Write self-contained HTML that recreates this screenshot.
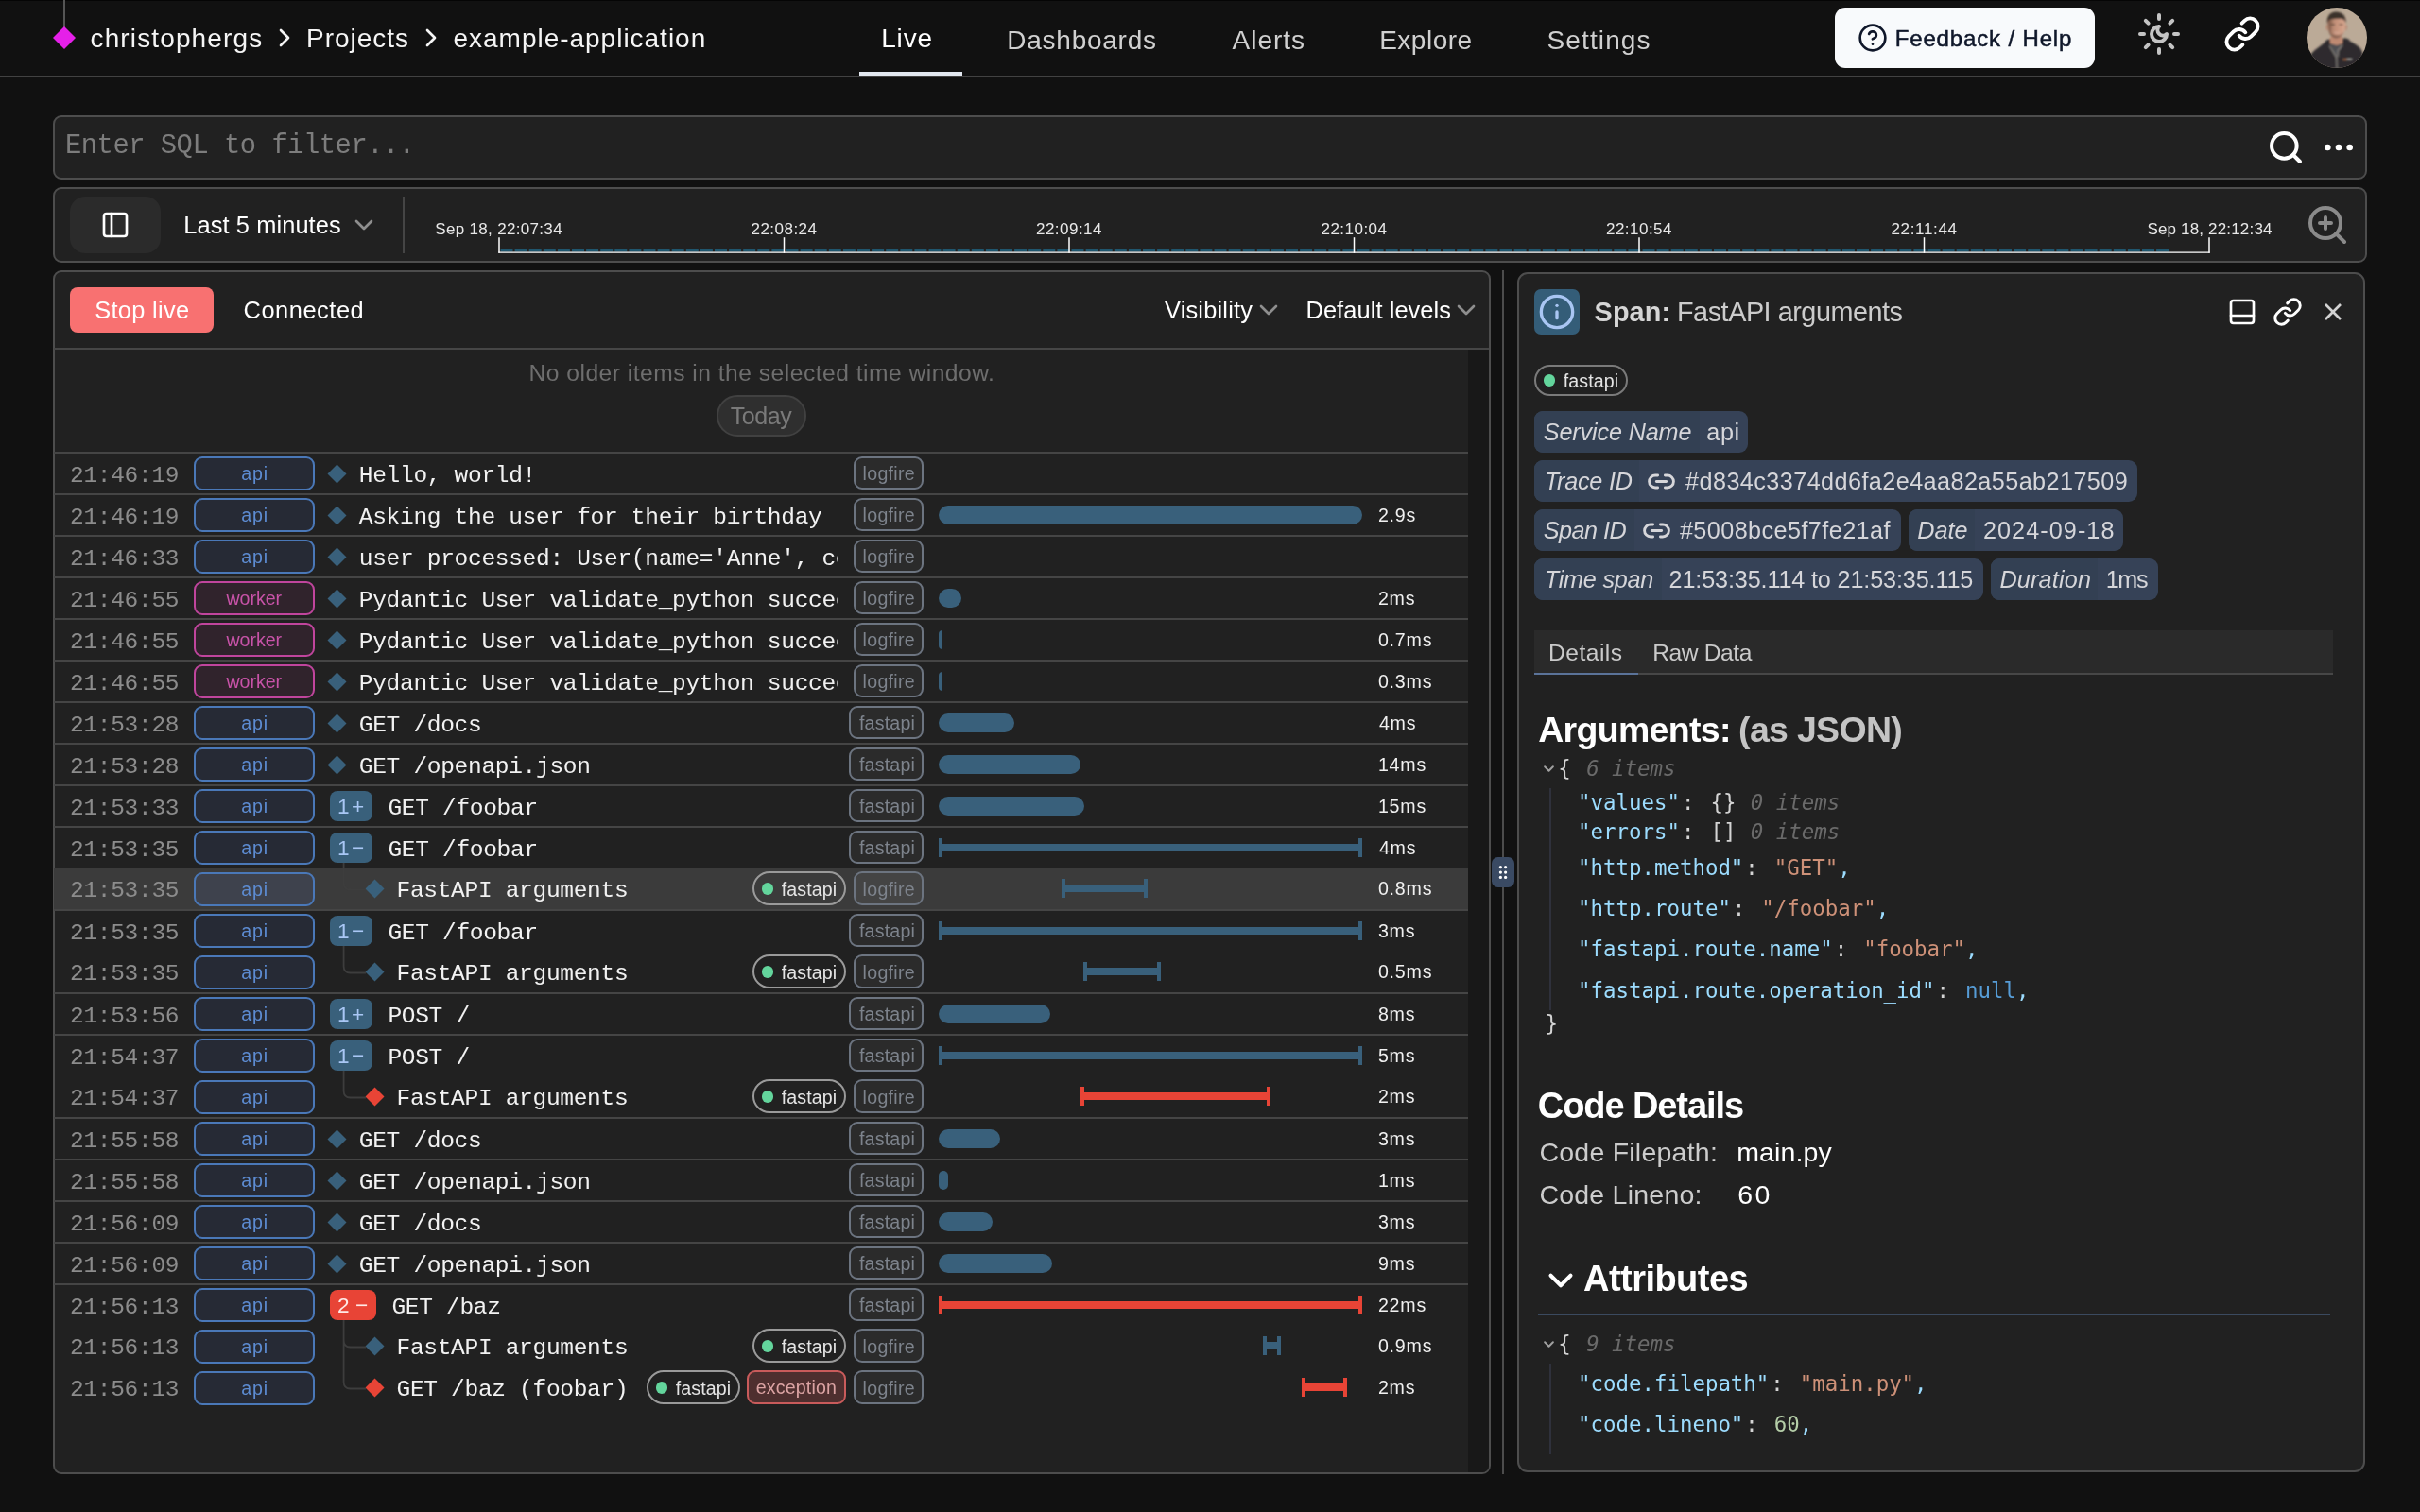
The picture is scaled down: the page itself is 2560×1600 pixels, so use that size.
<!DOCTYPE html>
<html lang="en"><head><meta charset="utf-8"><title>Logfire - Live</title><style>
*{box-sizing:border-box;margin:0;padding:0}
html,body{width:2560px;height:1600px;overflow:hidden;background:#111111}
body{position:relative;font-family:"Liberation Sans",sans-serif;-webkit-font-smoothing:antialiased}
div,span,svg.i,p,h1,h2,a,button{position:absolute;display:block}
.t{white-space:pre;font-family:"Liberation Sans",sans-serif}
.m{font-family:"Liberation Mono",monospace}
.d{font-family:"DejaVu Sans Mono",monospace}
.clip{overflow:hidden}
</style></head><body>
<div id="root" style="left:0;top:0;width:2560px;height:1600px;will-change:transform">
<div style="left:0;top:0;width:2560px;height:1px;background:#050505"></div>
<div style="left:0px;top:80px;width:2560px;height:2px;background:#424242;"></div>
<div style="left:67px;top:0px;width:1.6px;height:30px;background:#555555;"></div>
<svg class="i" style="left:54px;top:26px" width="28" height="28" viewBox="0 0 28 28"><path d="M14 2 26 14 14 26 2 14Z" fill="#e520e9"/></svg>
<span class="t" style="left:95.50px;top:27px;font-size:28px;line-height:28px;color:#f5f5f5;letter-spacing:1.131px;">christophergs</span>
<svg class="i" style="left:285px;top:24px;" width="32" height="32" viewBox="0 0 24 24" fill="none" stroke="#f5f5f5" stroke-width="2" stroke-linecap="round" stroke-linejoin="round"><path d="m9 18 6-6-6-6"/></svg>
<span class="t" style="left:324.00px;top:27px;font-size:28px;line-height:28px;color:#f5f5f5;letter-spacing:0.978px;">Projects</span>
<svg class="i" style="left:440px;top:24px;" width="32" height="32" viewBox="0 0 24 24" fill="none" stroke="#f5f5f5" stroke-width="2" stroke-linecap="round" stroke-linejoin="round"><path d="m9 18 6-6-6-6"/></svg>
<span class="t" style="left:479.50px;top:27px;font-size:28px;line-height:28px;color:#f5f5f5;letter-spacing:0.982px;">example-application</span>
<span class="t" style="left:932.20px;top:27px;font-size:28px;line-height:28px;color:#ffffff;letter-spacing:0.834px;">Live</span>
<div style="left:909px;top:76px;width:109px;height:4px;background:#e2e8f0;"></div>
<span class="t" style="left:1065.30px;top:29px;font-size:28px;line-height:28px;color:#d0d0d0;letter-spacing:0.743px;">Dashboards</span>
<span class="t" style="left:1303.60px;top:29px;font-size:28px;line-height:28px;color:#d0d0d0;letter-spacing:0.944px;">Alerts</span>
<span class="t" style="left:1459.20px;top:29px;font-size:28px;line-height:28px;color:#d0d0d0;letter-spacing:0.504px;">Explore</span>
<span class="t" style="left:1636.60px;top:29px;font-size:28px;line-height:28px;color:#d0d0d0;letter-spacing:1.102px;">Settings</span>
<div style="left:1941px;top:8px;width:275px;height:64px;background:#f8fafc;border-radius:11px;"></div>
<svg class="i" style="left:1964.6px;top:23.7px;" width="32" height="32" viewBox="0 0 24 24" fill="none" stroke="#0f172a" stroke-width="2" stroke-linecap="round" stroke-linejoin="round"><circle cx="12" cy="12" r="10"/><path d="M9.09 9a3 3 0 0 1 5.83 1c0 2-3 3-3 3"/><path d="M12 17h.01"/></svg>
<span class="t" style="left:2004.70px;top:29px;font-size:24px;line-height:24px;color:#0f172a;letter-spacing:0.851px;-webkit-text-stroke:0.5px #0f172a;">Feedback / Help</span>
<svg class="i" style="left:2260px;top:12px;" width="48" height="48" viewBox="0 0 24 24" fill="none" stroke="#c4c4c4" stroke-width="2" stroke-linecap="round" stroke-linejoin="round"><path d="M12 8a2.83 2.83 0 0 0 4 4 4 4 0 1 1-4-4"/><path d="M12 2v2"/><path d="M12 20v2"/><path d="m4.9 4.9 1.4 1.4"/><path d="m17.7 17.7 1.4 1.4"/><path d="M2 12h2"/><path d="M20 12h2"/><path d="m6.3 17.7-1.4 1.4"/><path d="m19.1 4.9-1.4 1.4"/></svg>
<svg class="i" style="left:2352px;top:16px;" width="40" height="40" viewBox="0 0 24 24" fill="none" stroke="#ffffff" stroke-width="2.3" stroke-linecap="round" stroke-linejoin="round"><path d="M10 13a5 5 0 0 0 7.54.54l3-3a5 5 0 0 0-7.07-7.07l-1.72 1.71"/><path d="M14 11a5 5 0 0 0-7.54-.54l-3 3a5 5 0 0 0 7.07 7.07l1.71-1.71"/></svg>
<svg class="i" style="left:2440px;top:8px" width="64" height="64" viewBox="0 0 64 64"><defs><clipPath id="av"><circle cx="32" cy="32" r="32"/></clipPath><filter id="avb" x="-10%" y="-10%" width="120%" height="120%"><feGaussianBlur stdDeviation="0.800"/></filter><linearGradient id="avf" x1="0" x2="1"><stop offset="0" stop-color="#96705c"/><stop offset="0.450" stop-color="#c4917a"/><stop offset="1" stop-color="#d8a78f"/></linearGradient></defs><g clip-path="url(#av)"><rect width="64" height="64" fill="#bbaa97"/><g filter="url(#avb)"><path d="M3 52C6 46 12 43 18.500 37.500 20 34.500 23 33.500 26 33L40 32.500C43 32 44.500 33 46 35.500 52 39 57.500 42 59 47L62 66H2Z" fill="#2d2c2e"/><path d="M24 37.500 36.500 37 32 52Z" fill="#4f4f52"/><path d="M25 31H38V38L32 40 25 38Z" fill="#bf8a72"/><path d="M22.400 10C22 24 24 29 28 31.500 31 33 34 32.500 37 30 40.500 26.500 41.500 22 41.200 10Z" fill="url(#avf)"/><path d="M20.300 18.500h2.200v5.500h-1.500ZM41.200 18.500h1.800l-.6 5.500h-1.400Z" fill="#b88670"/><path d="M23.500 25C25 30 29 33 32 32.500 35 32.500 38 29 39.500 25.500 37 29 34 30 32 29.500 29 29.500 26 28.500 23.500 25Z" fill="#7d5c4c" opacity="0.850"/><path d="M21.800 17C21 9 25 4.500 31 4.400 37 4.300 42.500 8 41.700 17 41 14 39.500 12.500 37 12 33 11.500 29 12 26 12.500 23.500 13 22.500 15 21.800 17Z" fill="#3a302c"/><path d="M25.500 18.200h4.500M34.500 18h4" stroke="#5a4236" stroke-width="1.200" fill="none"/><path d="M22.500 13C22.500 20 23 25 25.500 28.500 26 24 26.500 19 27.500 14Z" fill="#7a5646" opacity="0.550"/><path d="M29.500 26.200C31.500 27.200 33.500 27 35 26" stroke="#dcb4a2" stroke-width="1" fill="none"/><path d="M24.300 40.500C27 45 30 49 31.700 52.800L32.200 66M38 39.500 33.300 45.500 33 52" stroke="#8a8580" stroke-width="1.300" fill="none"/><path d="M38.600 55h4" stroke="#c8743c" stroke-width="1.200"/><path d="M42.600 54.800h5.500" stroke="#d8d4d0" stroke-width="1"/></g></g></svg>
<div style="left:56px;top:122px;width:2448px;height:68px;background:#212121;border:2px solid #4d4d4d;border-radius:9px;"></div>
<span class="t m" style="left:69.00px;top:141px;font-size:28.8px;line-height:28.8px;color:#7d7d7d;letter-spacing:-0.480px;">Enter SQL to filter...</span>
<svg class="i" style="left:2398px;top:136.3px;" width="40" height="40" viewBox="0 0 24 24" fill="none" stroke="#ffffff" stroke-width="2.4" stroke-linecap="round" stroke-linejoin="round"><circle cx="11" cy="11" r="8"/><path d="m21 21-4.3-4.3"/></svg>
<svg class="i" style="left:2453.8px;top:136px;" width="40" height="40" viewBox="0 0 24 24" fill="none" stroke="#ffffff" stroke-width="2" stroke-linecap="round" stroke-linejoin="round"><circle cx="12" cy="12" r="1"/><circle cx="19" cy="12" r="1"/><circle cx="5" cy="12" r="1"/></svg>
<div style="left:56px;top:198px;width:2448px;height:80px;background:#212121;border:2px solid #4d4d4d;border-radius:9px;"></div>
<div style="left:74px;top:208px;width:96px;height:60px;background:#2b2b2b;border-radius:16px;"></div>
<svg class="i" style="left:106px;top:222px;" width="32" height="32" viewBox="0 0 24 24" fill="none" stroke="#ffffff" stroke-width="2" stroke-linecap="round" stroke-linejoin="round"><rect width="18" height="18" x="3" y="3" rx="2"/><path d="M9 3v18"/></svg>
<span class="t" style="left:194.30px;top:226px;font-size:25.4px;line-height:25.4px;color:#ffffff;letter-spacing:0.097px;">Last 5 minutes</span>
<svg class="i" style="left:369px;top:222px;" width="32" height="32" viewBox="0 0 24 24" fill="none" stroke="#8e8e8e" stroke-width="2" stroke-linecap="round" stroke-linejoin="round"><path d="m6 9 6 6 6-6"/></svg>
<div style="left:426px;top:208px;width:2px;height:60px;background:#454545;"></div>
<svg class="i" style="left:520px;top:248px" width="1830" height="24" viewBox="520 248 1830 24" fill="none"><path d="M529.500 265.200H2294" stroke="#1f566e" stroke-width="2.800" stroke-dasharray="13 2.100"/><path d="M527.300 267.100H2337.700" stroke="#ffffff" stroke-width="1.400"/><path d="M528.0 251.200V267.800" stroke="#ffffff" stroke-width="1.500"/><path d="M829.5 251.200V267.800" stroke="#ffffff" stroke-width="1.500"/><path d="M1131.0 251.200V267.800" stroke="#ffffff" stroke-width="1.500"/><path d="M1432.5 251.200V267.800" stroke="#ffffff" stroke-width="1.500"/><path d="M1734.0 251.200V267.800" stroke="#ffffff" stroke-width="1.500"/><path d="M2035.5 251.200V267.800" stroke="#ffffff" stroke-width="1.500"/><path d="M2337.0 251.200V267.800" stroke="#ffffff" stroke-width="1.500"/></svg>
<span class="t" style="left:460.30px;top:234px;font-size:17px;line-height:17px;color:#e8e8e8;letter-spacing:0.319px;">Sep 18, 22:07:34</span>
<span class="t" style="left:794.50px;top:234px;font-size:17px;line-height:17px;color:#e8e8e8;letter-spacing:0.471px;">22:08:24</span>
<span class="t" style="left:1096.00px;top:234px;font-size:17px;line-height:17px;color:#e8e8e8;letter-spacing:0.471px;">22:09:14</span>
<span class="t" style="left:1397.50px;top:234px;font-size:17px;line-height:17px;color:#e8e8e8;letter-spacing:0.471px;">22:10:04</span>
<span class="t" style="left:1699.00px;top:234px;font-size:17px;line-height:17px;color:#e8e8e8;letter-spacing:0.471px;">22:10:54</span>
<span class="t" style="left:2000.50px;top:234px;font-size:17px;line-height:17px;color:#e8e8e8;letter-spacing:0.652px;">22:11:44</span>
<span class="t" style="left:2271.40px;top:234px;font-size:17px;line-height:17px;color:#e8e8e8;letter-spacing:0.172px;">Sep 18, 22:12:34</span>
<svg class="i" style="left:2438px;top:214px;" width="48" height="48" viewBox="0 0 24 24" fill="none" stroke="#8a8a8a" stroke-width="2" stroke-linecap="round" stroke-linejoin="round"><circle cx="11" cy="11" r="8"/><path d="M21 21l-4.35-4.35"/><path d="M11 8v6"/><path d="M8 11h6"/></svg>
<div style="left:56px;top:286px;width:1521px;height:1274px;background:#212121;border:2px solid #4d4d4d;border-radius:9px;"></div>
<div style="left:74px;top:304px;width:152px;height:48px;background:#f87171;border-radius:8px;"></div>
<span class="t" style="left:100.20px;top:316px;font-size:25.4px;line-height:25.4px;color:#ffffff;letter-spacing:0.329px;">Stop live</span>
<span class="t" style="left:257.60px;top:316px;font-size:25.4px;line-height:25.4px;color:#ffffff;letter-spacing:0.535px;">Connected</span>
<span class="t" style="left:1232.00px;top:316px;font-size:25.4px;line-height:25.4px;color:#ffffff;letter-spacing:0.182px;">Visibility</span>
<svg class="i" style="left:1326.2px;top:312px;" width="32" height="32" viewBox="0 0 24 24" fill="none" stroke="#8e8e8e" stroke-width="2" stroke-linecap="round" stroke-linejoin="round"><path d="m6 9 6 6 6-6"/></svg>
<span class="t" style="left:1381.50px;top:316px;font-size:25.4px;line-height:25.4px;color:#ffffff;letter-spacing:0.082px;">Default levels</span>
<svg class="i" style="left:1534.9px;top:312px;" width="32" height="32" viewBox="0 0 24 24" fill="none" stroke="#8e8e8e" stroke-width="2" stroke-linecap="round" stroke-linejoin="round"><path d="m6 9 6 6 6-6"/></svg>
<div style="left:57px;top:368px;width:1518px;height:2px;background:#464646;"></div>
<div style="left:1553px;top:370px;width:22px;height:1188px;background:#181818;border-radius:0 0 7px 0;"></div>
<span class="t" style="left:559.50px;top:383px;font-size:24.6px;line-height:24.6px;color:#6e6e6e;letter-spacing:0.496px;">No older items in the selected time window.</span>
<div style="left:758px;top:418px;width:95px;height:44px;background:#2f2f2f;border:2px solid #414141;border-radius:22px;"></div>
<span class="t" style="left:772.70px;top:428px;font-size:25px;line-height:25px;color:#7a7a7a;letter-spacing:-0.405px;">Today</span>
<div style="left:57px;top:478px;width:1496px;height:2px;background:#454545;"></div>
<span class="t m" style="left:74px;top:492px;font-size:24.5px;line-height:24.5px;letter-spacing:-0.3px;color:#8c8c8c">21:46:19</span>
<div style="left:205px;top:483px;width:128px;height:36px;background:#262a35;border:2px solid #4a78b8;border-radius:9px;"></div>
<span class="t" style="left:255.25px;top:492px;font-size:19.6px;line-height:19.6px;color:#5d8cd2;letter-spacing:0.859px;">api</span>
<svg class="i" style="left:346px;top:491px" width="21" height="21" viewBox="0 0 21 21"><path d="M10.500 0.500 20.500 10.500 10.500 20.500 0.500 10.500Z" fill="#39607b"/></svg>
<div class="clip" style="left:378.4px;top:483px;width:508.6px;height:36px"><span class="t m" style="left:1.4px;top:9px;font-size:24.5px;line-height:24.5px;letter-spacing:-0.3px;color:#f2f2f2">Hello, world!</span></div>
<div style="left:903.4px;top:483px;width:73.6px;height:35px;background:#2b2b2b;border:2px solid #6c7480;border-radius:9px;"></div>
<span class="t" style="left:912.60px;top:492px;font-size:19.6px;line-height:19.6px;color:#7d838c;letter-spacing:0.289px;">logfire</span>
<div style="left:57px;top:522px;width:1496px;height:2px;background:#454545;"></div>
<span class="t m" style="left:74px;top:536px;font-size:24.5px;line-height:24.5px;letter-spacing:-0.3px;color:#8c8c8c">21:46:19</span>
<div style="left:205px;top:527px;width:128px;height:36px;background:#262a35;border:2px solid #4a78b8;border-radius:9px;"></div>
<span class="t" style="left:255.25px;top:536px;font-size:19.6px;line-height:19.6px;color:#5d8cd2;letter-spacing:0.859px;">api</span>
<svg class="i" style="left:346px;top:535px" width="21" height="21" viewBox="0 0 21 21"><path d="M10.500 0.500 20.500 10.500 10.500 20.500 0.500 10.500Z" fill="#39607b"/></svg>
<div class="clip" style="left:378.4px;top:527px;width:508.6px;height:36px"><span class="t m" style="left:1.4px;top:9px;font-size:24.5px;line-height:24.5px;letter-spacing:-0.3px;color:#f2f2f2">Asking the user for their birthday</span></div>
<div style="left:903.4px;top:527px;width:73.6px;height:35px;background:#2b2b2b;border:2px solid #6c7480;border-radius:9px;"></div>
<span class="t" style="left:912.60px;top:536px;font-size:19.6px;line-height:19.6px;color:#7d838c;letter-spacing:0.289px;">logfire</span>
<div style="left:993px;top:535px;width:448px;height:20px;background:#39607b;border-radius:10px;"></div>
<span class="t" style="left:1457.90px;top:536px;font-size:19.6px;line-height:19.6px;color:#f0f0f0;letter-spacing:0.800px;">2.9s</span>
<div style="left:57px;top:566px;width:1496px;height:2px;background:#454545;"></div>
<span class="t m" style="left:74px;top:580px;font-size:24.5px;line-height:24.5px;letter-spacing:-0.3px;color:#8c8c8c">21:46:33</span>
<div style="left:205px;top:571px;width:128px;height:36px;background:#262a35;border:2px solid #4a78b8;border-radius:9px;"></div>
<span class="t" style="left:255.25px;top:580px;font-size:19.6px;line-height:19.6px;color:#5d8cd2;letter-spacing:0.859px;">api</span>
<svg class="i" style="left:346px;top:579px" width="21" height="21" viewBox="0 0 21 21"><path d="M10.500 0.500 20.500 10.500 10.500 20.500 0.500 10.500Z" fill="#39607b"/></svg>
<div class="clip" style="left:378.4px;top:571px;width:508.6px;height:36px"><span class="t m" style="left:1.4px;top:9px;font-size:24.5px;line-height:24.5px;letter-spacing:-0.3px;color:#f2f2f2">user processed: User(name='Anne', country_code='USA')</span></div>
<div style="left:903.4px;top:571px;width:73.6px;height:35px;background:#2b2b2b;border:2px solid #6c7480;border-radius:9px;"></div>
<span class="t" style="left:912.60px;top:580px;font-size:19.6px;line-height:19.6px;color:#7d838c;letter-spacing:0.289px;">logfire</span>
<div style="left:57px;top:610px;width:1496px;height:2px;background:#454545;"></div>
<span class="t m" style="left:74px;top:624px;font-size:24.5px;line-height:24.5px;letter-spacing:-0.3px;color:#8c8c8c">21:46:55</span>
<div style="left:205px;top:615px;width:128px;height:36px;background:#30232c;border:2px solid #c0459d;border-radius:9px;"></div>
<span class="t" style="left:239.50px;top:624px;font-size:19.6px;line-height:19.6px;color:#c853a8;letter-spacing:-0.053px;">worker</span>
<svg class="i" style="left:346px;top:623px" width="21" height="21" viewBox="0 0 21 21"><path d="M10.500 0.500 20.500 10.500 10.500 20.500 0.500 10.500Z" fill="#39607b"/></svg>
<div class="clip" style="left:378.4px;top:615px;width:508.6px;height:36px"><span class="t m" style="left:1.4px;top:9px;font-size:24.5px;line-height:24.5px;letter-spacing:-0.3px;color:#f2f2f2">Pydantic User validate_python succeeded</span></div>
<div style="left:903.4px;top:615px;width:73.6px;height:35px;background:#2b2b2b;border:2px solid #6c7480;border-radius:9px;"></div>
<span class="t" style="left:912.60px;top:624px;font-size:19.6px;line-height:19.6px;color:#7d838c;letter-spacing:0.289px;">logfire</span>
<div style="left:993px;top:623px;width:24px;height:20px;background:#39607b;border-radius:10px;"></div>
<span class="t" style="left:1457.90px;top:624px;font-size:19.6px;line-height:19.6px;color:#f0f0f0;letter-spacing:0.800px;">2ms</span>
<div style="left:57px;top:654px;width:1496px;height:2px;background:#454545;"></div>
<span class="t m" style="left:74px;top:668px;font-size:24.5px;line-height:24.5px;letter-spacing:-0.3px;color:#8c8c8c">21:46:55</span>
<div style="left:205px;top:659px;width:128px;height:36px;background:#30232c;border:2px solid #c0459d;border-radius:9px;"></div>
<span class="t" style="left:239.50px;top:668px;font-size:19.6px;line-height:19.6px;color:#c853a8;letter-spacing:-0.053px;">worker</span>
<svg class="i" style="left:346px;top:667px" width="21" height="21" viewBox="0 0 21 21"><path d="M10.500 0.500 20.500 10.500 10.500 20.500 0.500 10.500Z" fill="#39607b"/></svg>
<div class="clip" style="left:378.4px;top:659px;width:508.6px;height:36px"><span class="t m" style="left:1.4px;top:9px;font-size:24.5px;line-height:24.5px;letter-spacing:-0.3px;color:#f2f2f2">Pydantic User validate_python succeeded</span></div>
<div style="left:903.4px;top:659px;width:73.6px;height:35px;background:#2b2b2b;border:2px solid #6c7480;border-radius:9px;"></div>
<span class="t" style="left:912.60px;top:668px;font-size:19.6px;line-height:19.6px;color:#7d838c;letter-spacing:0.289px;">logfire</span>
<div style="left:993px;top:667px;width:4px;height:20px;background:#39607b;border-radius:10px 0 0 10px;"></div>
<span class="t" style="left:1457.90px;top:668px;font-size:19.6px;line-height:19.6px;color:#f0f0f0;letter-spacing:0.800px;">0.7ms</span>
<div style="left:57px;top:698px;width:1496px;height:2px;background:#454545;"></div>
<span class="t m" style="left:74px;top:712px;font-size:24.5px;line-height:24.5px;letter-spacing:-0.3px;color:#8c8c8c">21:46:55</span>
<div style="left:205px;top:703px;width:128px;height:36px;background:#30232c;border:2px solid #c0459d;border-radius:9px;"></div>
<span class="t" style="left:239.50px;top:712px;font-size:19.6px;line-height:19.6px;color:#c853a8;letter-spacing:-0.053px;">worker</span>
<svg class="i" style="left:346px;top:711px" width="21" height="21" viewBox="0 0 21 21"><path d="M10.500 0.500 20.500 10.500 10.500 20.500 0.500 10.500Z" fill="#39607b"/></svg>
<div class="clip" style="left:378.4px;top:703px;width:508.6px;height:36px"><span class="t m" style="left:1.4px;top:9px;font-size:24.5px;line-height:24.5px;letter-spacing:-0.3px;color:#f2f2f2">Pydantic User validate_python succeeded</span></div>
<div style="left:903.4px;top:703px;width:73.6px;height:35px;background:#2b2b2b;border:2px solid #6c7480;border-radius:9px;"></div>
<span class="t" style="left:912.60px;top:712px;font-size:19.6px;line-height:19.6px;color:#7d838c;letter-spacing:0.289px;">logfire</span>
<div style="left:993px;top:711px;width:4px;height:20px;background:#39607b;border-radius:10px 0 0 10px;"></div>
<span class="t" style="left:1457.90px;top:712px;font-size:19.6px;line-height:19.6px;color:#f0f0f0;letter-spacing:0.800px;">0.3ms</span>
<div style="left:57px;top:742px;width:1496px;height:2px;background:#454545;"></div>
<span class="t m" style="left:74px;top:756px;font-size:24.5px;line-height:24.5px;letter-spacing:-0.3px;color:#8c8c8c">21:53:28</span>
<div style="left:205px;top:747px;width:128px;height:36px;background:#262a35;border:2px solid #4a78b8;border-radius:9px;"></div>
<span class="t" style="left:255.25px;top:756px;font-size:19.6px;line-height:19.6px;color:#5d8cd2;letter-spacing:0.859px;">api</span>
<svg class="i" style="left:346px;top:755px" width="21" height="21" viewBox="0 0 21 21"><path d="M10.500 0.500 20.500 10.500 10.500 20.500 0.500 10.500Z" fill="#39607b"/></svg>
<div class="clip" style="left:378.4px;top:747px;width:508.6px;height:36px"><span class="t m" style="left:1.4px;top:9px;font-size:24.5px;line-height:24.5px;letter-spacing:-0.3px;color:#f2f2f2">GET /docs</span></div>
<div style="left:898.4px;top:747px;width:78.6px;height:35px;background:#2b2b2b;border:2px solid #6c7480;border-radius:9px;"></div>
<span class="t" style="left:908.95px;top:756px;font-size:19.6px;line-height:19.6px;color:#7d838c;letter-spacing:0.193px;">fastapi</span>
<div style="left:993px;top:755px;width:80px;height:20px;background:#39607b;border-radius:10px;"></div>
<span class="t" style="left:1458.90px;top:756px;font-size:19.6px;line-height:19.6px;color:#f0f0f0;letter-spacing:0.800px;">4ms</span>
<div style="left:57px;top:786px;width:1496px;height:2px;background:#454545;"></div>
<span class="t m" style="left:74px;top:800px;font-size:24.5px;line-height:24.5px;letter-spacing:-0.3px;color:#8c8c8c">21:53:28</span>
<div style="left:205px;top:791px;width:128px;height:36px;background:#262a35;border:2px solid #4a78b8;border-radius:9px;"></div>
<span class="t" style="left:255.25px;top:800px;font-size:19.6px;line-height:19.6px;color:#5d8cd2;letter-spacing:0.859px;">api</span>
<svg class="i" style="left:346px;top:799px" width="21" height="21" viewBox="0 0 21 21"><path d="M10.500 0.500 20.500 10.500 10.500 20.500 0.500 10.500Z" fill="#39607b"/></svg>
<div class="clip" style="left:378.4px;top:791px;width:508.6px;height:36px"><span class="t m" style="left:1.4px;top:9px;font-size:24.5px;line-height:24.5px;letter-spacing:-0.3px;color:#f2f2f2">GET /openapi.json</span></div>
<div style="left:898.4px;top:791px;width:78.6px;height:35px;background:#2b2b2b;border:2px solid #6c7480;border-radius:9px;"></div>
<span class="t" style="left:908.95px;top:800px;font-size:19.6px;line-height:19.6px;color:#7d838c;letter-spacing:0.193px;">fastapi</span>
<div style="left:993px;top:799px;width:150px;height:20px;background:#39607b;border-radius:10px;"></div>
<span class="t" style="left:1457.90px;top:800px;font-size:19.6px;line-height:19.6px;color:#f0f0f0;letter-spacing:0.800px;">14ms</span>
<div style="left:57px;top:830px;width:1496px;height:2px;background:#454545;"></div>
<span class="t m" style="left:74px;top:844px;font-size:24.5px;line-height:24.5px;letter-spacing:-0.3px;color:#8c8c8c">21:53:33</span>
<div style="left:205px;top:835px;width:128px;height:36px;background:#262a35;border:2px solid #4a78b8;border-radius:9px;"></div>
<span class="t" style="left:255.25px;top:844px;font-size:19.6px;line-height:19.6px;color:#5d8cd2;letter-spacing:0.859px;">api</span>
<div style="left:349px;top:837px;width:45px;height:32px;background:#39607b;border-radius:8px;"></div>
<span class="t" style="left:357.10px;top:843px;font-size:22.6px;line-height:22.6px;color:#a9c7f5;letter-spacing:2.337px;">1+</span>
<div class="clip" style="left:409px;top:835px;width:478px;height:36px"><span class="t m" style="left:1.4px;top:9px;font-size:24.5px;line-height:24.5px;letter-spacing:-0.3px;color:#f2f2f2">GET /foobar</span></div>
<div style="left:898.4px;top:835px;width:78.6px;height:35px;background:#2b2b2b;border:2px solid #6c7480;border-radius:9px;"></div>
<span class="t" style="left:908.95px;top:844px;font-size:19.6px;line-height:19.6px;color:#7d838c;letter-spacing:0.193px;">fastapi</span>
<div style="left:993px;top:843px;width:154px;height:20px;background:#39607b;border-radius:10px;"></div>
<span class="t" style="left:1457.90px;top:844px;font-size:19.6px;line-height:19.6px;color:#f0f0f0;letter-spacing:0.800px;">15ms</span>
<div style="left:57px;top:874px;width:1496px;height:2px;background:#454545;"></div>
<span class="t m" style="left:74px;top:888px;font-size:24.5px;line-height:24.5px;letter-spacing:-0.3px;color:#8c8c8c">21:53:35</span>
<div style="left:205px;top:879px;width:128px;height:36px;background:#262a35;border:2px solid #4a78b8;border-radius:9px;"></div>
<span class="t" style="left:255.25px;top:888px;font-size:19.6px;line-height:19.6px;color:#5d8cd2;letter-spacing:0.859px;">api</span>
<div style="left:349px;top:881px;width:45px;height:32px;background:#39607b;border-radius:8px;"></div>
<span class="t" style="left:357.10px;top:887px;font-size:22.6px;line-height:22.6px;color:#a9c7f5;letter-spacing:2.337px;">1−</span>
<div class="clip" style="left:409px;top:879px;width:478px;height:36px"><span class="t m" style="left:1.4px;top:9px;font-size:24.5px;line-height:24.5px;letter-spacing:-0.3px;color:#f2f2f2">GET /foobar</span></div>
<div style="left:898.4px;top:879px;width:78.6px;height:35px;background:#2b2b2b;border:2px solid #6c7480;border-radius:9px;"></div>
<span class="t" style="left:908.95px;top:888px;font-size:19.6px;line-height:19.6px;color:#7d838c;letter-spacing:0.193px;">fastapi</span>
<div style="left:993px;top:893px;width:448px;height:8px;background:#39607b;"></div>
<div style="left:993px;top:887px;width:4px;height:20px;background:#39607b;"></div>
<div style="left:1437px;top:887px;width:4px;height:20px;background:#39607b;"></div>
<span class="t" style="left:1458.90px;top:888px;font-size:19.6px;line-height:19.6px;color:#f0f0f0;letter-spacing:0.800px;">4ms</span>
<div style="left:57px;top:918px;width:1496px;height:45px;background:#3b3b3b;"></div>
<div style="left:57px;top:962px;width:1496px;height:2px;background:#555555;"></div>
<span class="t m" style="left:74px;top:931px;font-size:24.5px;line-height:24.5px;letter-spacing:-0.3px;color:#8c8c8c">21:53:35</span>
<div style="left:205px;top:923px;width:128px;height:36px;background:#3e424d;border:2px solid #4a78b8;border-radius:9px;"></div>
<span class="t" style="left:255.25px;top:932px;font-size:19.6px;line-height:19.6px;color:#5d8cd2;letter-spacing:0.859px;">api</span>
<svg class="i" style="left:385.7px;top:930px" width="21" height="21" viewBox="0 0 21 21"><path d="M10.500 0.500 20.500 10.500 10.500 20.500 0.500 10.500Z" fill="#39607b"/></svg>
<div class="clip" style="left:418.1px;top:923px;width:468.9px;height:36px"><span class="t m" style="left:1.4px;top:8px;font-size:24.5px;line-height:24.5px;letter-spacing:-0.3px;color:#f2f2f2">FastAPI arguments</span></div>
<div style="left:796px;top:922px;width:99px;height:36px;border:2px solid #9a9a9a;border-radius:18px;"></div>
<div style="left:806px;top:934.3px;width:12.4px;height:12.4px;background:#63d59c;border-radius:7px;"></div>
<span class="t" style="left:826.80px;top:932px;font-size:19.6px;line-height:19.6px;color:#e4e4e4;letter-spacing:0.109px;">fastapi</span>
<div style="left:903.4px;top:922px;width:73.6px;height:36px;background:#444444;border:2px solid #6c7480;border-radius:9px;"></div>
<span class="t" style="left:912.60px;top:932px;font-size:19.6px;line-height:19.6px;color:#7d838c;letter-spacing:0.289px;">logfire</span>
<div style="left:1122.7px;top:936px;width:91.0px;height:8px;background:#39607b;"></div>
<div style="left:1122.7px;top:930px;width:4px;height:20px;background:#39607b;"></div>
<div style="left:1209.7px;top:930px;width:4px;height:20px;background:#39607b;"></div>
<span class="t" style="left:1457.90px;top:931px;font-size:19.6px;line-height:19.6px;color:#f0f0f0;letter-spacing:0.800px;">0.8ms</span>
<div style="left:57px;top:962px;width:1496px;height:2px;background:#454545;"></div>
<span class="t m" style="left:74px;top:976px;font-size:24.5px;line-height:24.5px;letter-spacing:-0.3px;color:#8c8c8c">21:53:35</span>
<div style="left:205px;top:967px;width:128px;height:36px;background:#262a35;border:2px solid #4a78b8;border-radius:9px;"></div>
<span class="t" style="left:255.25px;top:976px;font-size:19.6px;line-height:19.6px;color:#5d8cd2;letter-spacing:0.859px;">api</span>
<div style="left:349px;top:969px;width:45px;height:32px;background:#39607b;border-radius:8px;"></div>
<span class="t" style="left:357.10px;top:975px;font-size:22.6px;line-height:22.6px;color:#a9c7f5;letter-spacing:2.337px;">1−</span>
<div class="clip" style="left:409px;top:967px;width:478px;height:36px"><span class="t m" style="left:1.4px;top:9px;font-size:24.5px;line-height:24.5px;letter-spacing:-0.3px;color:#f2f2f2">GET /foobar</span></div>
<div style="left:898.4px;top:967px;width:78.6px;height:35px;background:#2b2b2b;border:2px solid #6c7480;border-radius:9px;"></div>
<span class="t" style="left:908.95px;top:976px;font-size:19.6px;line-height:19.6px;color:#7d838c;letter-spacing:0.193px;">fastapi</span>
<div style="left:993px;top:981px;width:448px;height:8px;background:#39607b;"></div>
<div style="left:993px;top:975px;width:4px;height:20px;background:#39607b;"></div>
<div style="left:1437px;top:975px;width:4px;height:20px;background:#39607b;"></div>
<span class="t" style="left:1457.90px;top:976px;font-size:19.6px;line-height:19.6px;color:#f0f0f0;letter-spacing:0.800px;">3ms</span>
<span class="t m" style="left:74px;top:1019px;font-size:24.5px;line-height:24.5px;letter-spacing:-0.3px;color:#8c8c8c">21:53:35</span>
<div style="left:205px;top:1011px;width:128px;height:36px;background:#262a35;border:2px solid #4a78b8;border-radius:9px;"></div>
<span class="t" style="left:255.25px;top:1020px;font-size:19.6px;line-height:19.6px;color:#5d8cd2;letter-spacing:0.859px;">api</span>
<svg class="i" style="left:385.7px;top:1018px" width="21" height="21" viewBox="0 0 21 21"><path d="M10.500 0.500 20.500 10.500 10.500 20.500 0.500 10.500Z" fill="#39607b"/></svg>
<div class="clip" style="left:418.1px;top:1011px;width:468.9px;height:36px"><span class="t m" style="left:1.4px;top:8px;font-size:24.5px;line-height:24.5px;letter-spacing:-0.3px;color:#f2f2f2">FastAPI arguments</span></div>
<div style="left:796px;top:1010px;width:99px;height:36px;border:2px solid #9a9a9a;border-radius:18px;"></div>
<div style="left:806px;top:1022.3px;width:12.4px;height:12.4px;background:#63d59c;border-radius:7px;"></div>
<span class="t" style="left:826.80px;top:1020px;font-size:19.6px;line-height:19.6px;color:#e4e4e4;letter-spacing:0.109px;">fastapi</span>
<div style="left:903.4px;top:1010px;width:73.6px;height:36px;background:#2b2b2b;border:2px solid #6c7480;border-radius:9px;"></div>
<span class="t" style="left:912.60px;top:1020px;font-size:19.6px;line-height:19.6px;color:#7d838c;letter-spacing:0.289px;">logfire</span>
<div style="left:1145.9px;top:1024px;width:82.0px;height:8px;background:#39607b;"></div>
<div style="left:1145.9px;top:1018px;width:4px;height:20px;background:#39607b;"></div>
<div style="left:1223.9px;top:1018px;width:4px;height:20px;background:#39607b;"></div>
<span class="t" style="left:1457.90px;top:1019px;font-size:19.6px;line-height:19.6px;color:#f0f0f0;letter-spacing:0.800px;">0.5ms</span>
<div style="left:57px;top:1050px;width:1496px;height:2px;background:#454545;"></div>
<span class="t m" style="left:74px;top:1064px;font-size:24.5px;line-height:24.5px;letter-spacing:-0.3px;color:#8c8c8c">21:53:56</span>
<div style="left:205px;top:1055px;width:128px;height:36px;background:#262a35;border:2px solid #4a78b8;border-radius:9px;"></div>
<span class="t" style="left:255.25px;top:1064px;font-size:19.6px;line-height:19.6px;color:#5d8cd2;letter-spacing:0.859px;">api</span>
<div style="left:349px;top:1057px;width:45px;height:32px;background:#39607b;border-radius:8px;"></div>
<span class="t" style="left:357.10px;top:1063px;font-size:22.6px;line-height:22.6px;color:#a9c7f5;letter-spacing:2.337px;">1+</span>
<div class="clip" style="left:409px;top:1055px;width:478px;height:36px"><span class="t m" style="left:1.4px;top:9px;font-size:24.5px;line-height:24.5px;letter-spacing:-0.3px;color:#f2f2f2">POST /</span></div>
<div style="left:898.4px;top:1055px;width:78.6px;height:35px;background:#2b2b2b;border:2px solid #6c7480;border-radius:9px;"></div>
<span class="t" style="left:908.95px;top:1064px;font-size:19.6px;line-height:19.6px;color:#7d838c;letter-spacing:0.193px;">fastapi</span>
<div style="left:993px;top:1063px;width:118px;height:20px;background:#39607b;border-radius:10px;"></div>
<span class="t" style="left:1457.90px;top:1064px;font-size:19.6px;line-height:19.6px;color:#f0f0f0;letter-spacing:0.800px;">8ms</span>
<div style="left:57px;top:1094px;width:1496px;height:2px;background:#454545;"></div>
<span class="t m" style="left:74px;top:1108px;font-size:24.5px;line-height:24.5px;letter-spacing:-0.3px;color:#8c8c8c">21:54:37</span>
<div style="left:205px;top:1099px;width:128px;height:36px;background:#262a35;border:2px solid #4a78b8;border-radius:9px;"></div>
<span class="t" style="left:255.25px;top:1108px;font-size:19.6px;line-height:19.6px;color:#5d8cd2;letter-spacing:0.859px;">api</span>
<div style="left:349px;top:1101px;width:45px;height:32px;background:#39607b;border-radius:8px;"></div>
<span class="t" style="left:357.10px;top:1107px;font-size:22.6px;line-height:22.6px;color:#a9c7f5;letter-spacing:2.337px;">1−</span>
<div class="clip" style="left:409px;top:1099px;width:478px;height:36px"><span class="t m" style="left:1.4px;top:9px;font-size:24.5px;line-height:24.5px;letter-spacing:-0.3px;color:#f2f2f2">POST /</span></div>
<div style="left:898.4px;top:1099px;width:78.6px;height:35px;background:#2b2b2b;border:2px solid #6c7480;border-radius:9px;"></div>
<span class="t" style="left:908.95px;top:1108px;font-size:19.6px;line-height:19.6px;color:#7d838c;letter-spacing:0.193px;">fastapi</span>
<div style="left:993px;top:1113px;width:448px;height:8px;background:#39607b;"></div>
<div style="left:993px;top:1107px;width:4px;height:20px;background:#39607b;"></div>
<div style="left:1437px;top:1107px;width:4px;height:20px;background:#39607b;"></div>
<span class="t" style="left:1457.90px;top:1108px;font-size:19.6px;line-height:19.6px;color:#f0f0f0;letter-spacing:0.800px;">5ms</span>
<span class="t m" style="left:74px;top:1151px;font-size:24.5px;line-height:24.5px;letter-spacing:-0.3px;color:#8c8c8c">21:54:37</span>
<div style="left:205px;top:1143px;width:128px;height:36px;background:#262a35;border:2px solid #4a78b8;border-radius:9px;"></div>
<span class="t" style="left:255.25px;top:1152px;font-size:19.6px;line-height:19.6px;color:#5d8cd2;letter-spacing:0.859px;">api</span>
<svg class="i" style="left:385.7px;top:1150px" width="21" height="21" viewBox="0 0 21 21"><path d="M10.500 0.500 20.500 10.500 10.500 20.500 0.500 10.500Z" fill="#e84436"/></svg>
<div class="clip" style="left:418.1px;top:1143px;width:468.9px;height:36px"><span class="t m" style="left:1.4px;top:8px;font-size:24.5px;line-height:24.5px;letter-spacing:-0.3px;color:#f2f2f2">FastAPI arguments</span></div>
<div style="left:796px;top:1142px;width:99px;height:36px;border:2px solid #9a9a9a;border-radius:18px;"></div>
<div style="left:806px;top:1154.3px;width:12.4px;height:12.4px;background:#63d59c;border-radius:7px;"></div>
<span class="t" style="left:826.80px;top:1152px;font-size:19.6px;line-height:19.6px;color:#e4e4e4;letter-spacing:0.109px;">fastapi</span>
<div style="left:903.4px;top:1142px;width:73.6px;height:36px;background:#2b2b2b;border:2px solid #6c7480;border-radius:9px;"></div>
<span class="t" style="left:912.60px;top:1152px;font-size:19.6px;line-height:19.6px;color:#7d838c;letter-spacing:0.289px;">logfire</span>
<div style="left:1142.6px;top:1156px;width:201.70000000000005px;height:8px;background:#e84436;"></div>
<div style="left:1142.6px;top:1150px;width:4px;height:20px;background:#e84436;"></div>
<div style="left:1340.3px;top:1150px;width:4px;height:20px;background:#e84436;"></div>
<span class="t" style="left:1457.90px;top:1151px;font-size:19.6px;line-height:19.6px;color:#f0f0f0;letter-spacing:0.800px;">2ms</span>
<div style="left:57px;top:1182px;width:1496px;height:2px;background:#454545;"></div>
<span class="t m" style="left:74px;top:1196px;font-size:24.5px;line-height:24.5px;letter-spacing:-0.3px;color:#8c8c8c">21:55:58</span>
<div style="left:205px;top:1187px;width:128px;height:36px;background:#262a35;border:2px solid #4a78b8;border-radius:9px;"></div>
<span class="t" style="left:255.25px;top:1196px;font-size:19.6px;line-height:19.6px;color:#5d8cd2;letter-spacing:0.859px;">api</span>
<svg class="i" style="left:346px;top:1195px" width="21" height="21" viewBox="0 0 21 21"><path d="M10.500 0.500 20.500 10.500 10.500 20.500 0.500 10.500Z" fill="#39607b"/></svg>
<div class="clip" style="left:378.4px;top:1187px;width:508.6px;height:36px"><span class="t m" style="left:1.4px;top:9px;font-size:24.5px;line-height:24.5px;letter-spacing:-0.3px;color:#f2f2f2">GET /docs</span></div>
<div style="left:898.4px;top:1187px;width:78.6px;height:35px;background:#2b2b2b;border:2px solid #6c7480;border-radius:9px;"></div>
<span class="t" style="left:908.95px;top:1196px;font-size:19.6px;line-height:19.6px;color:#7d838c;letter-spacing:0.193px;">fastapi</span>
<div style="left:993px;top:1195px;width:65px;height:20px;background:#39607b;border-radius:10px;"></div>
<span class="t" style="left:1457.90px;top:1196px;font-size:19.6px;line-height:19.6px;color:#f0f0f0;letter-spacing:0.800px;">3ms</span>
<div style="left:57px;top:1226px;width:1496px;height:2px;background:#454545;"></div>
<span class="t m" style="left:74px;top:1240px;font-size:24.5px;line-height:24.5px;letter-spacing:-0.3px;color:#8c8c8c">21:55:58</span>
<div style="left:205px;top:1231px;width:128px;height:36px;background:#262a35;border:2px solid #4a78b8;border-radius:9px;"></div>
<span class="t" style="left:255.25px;top:1240px;font-size:19.6px;line-height:19.6px;color:#5d8cd2;letter-spacing:0.859px;">api</span>
<svg class="i" style="left:346px;top:1239px" width="21" height="21" viewBox="0 0 21 21"><path d="M10.500 0.500 20.500 10.500 10.500 20.500 0.500 10.500Z" fill="#39607b"/></svg>
<div class="clip" style="left:378.4px;top:1231px;width:508.6px;height:36px"><span class="t m" style="left:1.4px;top:9px;font-size:24.5px;line-height:24.5px;letter-spacing:-0.3px;color:#f2f2f2">GET /openapi.json</span></div>
<div style="left:898.4px;top:1231px;width:78.6px;height:35px;background:#2b2b2b;border:2px solid #6c7480;border-radius:9px;"></div>
<span class="t" style="left:908.95px;top:1240px;font-size:19.6px;line-height:19.6px;color:#7d838c;letter-spacing:0.193px;">fastapi</span>
<div style="left:993px;top:1239px;width:10px;height:20px;background:#39607b;border-radius:10px;"></div>
<span class="t" style="left:1457.90px;top:1240px;font-size:19.6px;line-height:19.6px;color:#f0f0f0;letter-spacing:0.800px;">1ms</span>
<div style="left:57px;top:1270px;width:1496px;height:2px;background:#454545;"></div>
<span class="t m" style="left:74px;top:1284px;font-size:24.5px;line-height:24.5px;letter-spacing:-0.3px;color:#8c8c8c">21:56:09</span>
<div style="left:205px;top:1275px;width:128px;height:36px;background:#262a35;border:2px solid #4a78b8;border-radius:9px;"></div>
<span class="t" style="left:255.25px;top:1284px;font-size:19.6px;line-height:19.6px;color:#5d8cd2;letter-spacing:0.859px;">api</span>
<svg class="i" style="left:346px;top:1283px" width="21" height="21" viewBox="0 0 21 21"><path d="M10.500 0.500 20.500 10.500 10.500 20.500 0.500 10.500Z" fill="#39607b"/></svg>
<div class="clip" style="left:378.4px;top:1275px;width:508.6px;height:36px"><span class="t m" style="left:1.4px;top:9px;font-size:24.5px;line-height:24.5px;letter-spacing:-0.3px;color:#f2f2f2">GET /docs</span></div>
<div style="left:898.4px;top:1275px;width:78.6px;height:35px;background:#2b2b2b;border:2px solid #6c7480;border-radius:9px;"></div>
<span class="t" style="left:908.95px;top:1284px;font-size:19.6px;line-height:19.6px;color:#7d838c;letter-spacing:0.193px;">fastapi</span>
<div style="left:993px;top:1283px;width:57px;height:20px;background:#39607b;border-radius:10px;"></div>
<span class="t" style="left:1457.90px;top:1284px;font-size:19.6px;line-height:19.6px;color:#f0f0f0;letter-spacing:0.800px;">3ms</span>
<div style="left:57px;top:1314px;width:1496px;height:2px;background:#454545;"></div>
<span class="t m" style="left:74px;top:1328px;font-size:24.5px;line-height:24.5px;letter-spacing:-0.3px;color:#8c8c8c">21:56:09</span>
<div style="left:205px;top:1319px;width:128px;height:36px;background:#262a35;border:2px solid #4a78b8;border-radius:9px;"></div>
<span class="t" style="left:255.25px;top:1328px;font-size:19.6px;line-height:19.6px;color:#5d8cd2;letter-spacing:0.859px;">api</span>
<svg class="i" style="left:346px;top:1327px" width="21" height="21" viewBox="0 0 21 21"><path d="M10.500 0.500 20.500 10.500 10.500 20.500 0.500 10.500Z" fill="#39607b"/></svg>
<div class="clip" style="left:378.4px;top:1319px;width:508.6px;height:36px"><span class="t m" style="left:1.4px;top:9px;font-size:24.5px;line-height:24.5px;letter-spacing:-0.3px;color:#f2f2f2">GET /openapi.json</span></div>
<div style="left:898.4px;top:1319px;width:78.6px;height:35px;background:#2b2b2b;border:2px solid #6c7480;border-radius:9px;"></div>
<span class="t" style="left:908.95px;top:1328px;font-size:19.6px;line-height:19.6px;color:#7d838c;letter-spacing:0.193px;">fastapi</span>
<div style="left:993px;top:1327px;width:120px;height:20px;background:#39607b;border-radius:10px;"></div>
<span class="t" style="left:1457.90px;top:1328px;font-size:19.6px;line-height:19.6px;color:#f0f0f0;letter-spacing:0.800px;">9ms</span>
<div style="left:57px;top:1358px;width:1496px;height:2px;background:#454545;"></div>
<span class="t m" style="left:74px;top:1372px;font-size:24.5px;line-height:24.5px;letter-spacing:-0.3px;color:#8c8c8c">21:56:13</span>
<div style="left:205px;top:1363px;width:128px;height:36px;background:#262a35;border:2px solid #4a78b8;border-radius:9px;"></div>
<span class="t" style="left:255.25px;top:1372px;font-size:19.6px;line-height:19.6px;color:#5d8cd2;letter-spacing:0.859px;">api</span>
<div style="left:349px;top:1365px;width:49px;height:32px;background:#e84436;border-radius:8px;"></div>
<span class="t" style="left:357.10px;top:1371px;font-size:22.6px;line-height:22.6px;color:#ffe9e6;letter-spacing:6.337px;">2−</span>
<div class="clip" style="left:413px;top:1363px;width:474px;height:36px"><span class="t m" style="left:1.4px;top:9px;font-size:24.5px;line-height:24.5px;letter-spacing:-0.3px;color:#f2f2f2">GET /baz</span></div>
<div style="left:898.4px;top:1363px;width:78.6px;height:35px;background:#2b2b2b;border:2px solid #6c7480;border-radius:9px;"></div>
<span class="t" style="left:908.95px;top:1372px;font-size:19.6px;line-height:19.6px;color:#7d838c;letter-spacing:0.193px;">fastapi</span>
<div style="left:993px;top:1377px;width:448px;height:8px;background:#e84436;"></div>
<div style="left:993px;top:1371px;width:4px;height:20px;background:#e84436;"></div>
<div style="left:1437px;top:1371px;width:4px;height:20px;background:#e84436;"></div>
<span class="t" style="left:1457.90px;top:1372px;font-size:19.6px;line-height:19.6px;color:#f0f0f0;letter-spacing:0.800px;">22ms</span>
<span class="t m" style="left:74px;top:1415px;font-size:24.5px;line-height:24.5px;letter-spacing:-0.3px;color:#8c8c8c">21:56:13</span>
<div style="left:205px;top:1407px;width:128px;height:36px;background:#262a35;border:2px solid #4a78b8;border-radius:9px;"></div>
<span class="t" style="left:255.25px;top:1416px;font-size:19.6px;line-height:19.6px;color:#5d8cd2;letter-spacing:0.859px;">api</span>
<svg class="i" style="left:385.7px;top:1414px" width="21" height="21" viewBox="0 0 21 21"><path d="M10.500 0.500 20.500 10.500 10.500 20.500 0.500 10.500Z" fill="#39607b"/></svg>
<div class="clip" style="left:418.1px;top:1407px;width:468.9px;height:36px"><span class="t m" style="left:1.4px;top:8px;font-size:24.5px;line-height:24.5px;letter-spacing:-0.3px;color:#f2f2f2">FastAPI arguments</span></div>
<div style="left:796px;top:1406px;width:99px;height:36px;border:2px solid #9a9a9a;border-radius:18px;"></div>
<div style="left:806px;top:1418.3px;width:12.4px;height:12.4px;background:#63d59c;border-radius:7px;"></div>
<span class="t" style="left:826.80px;top:1416px;font-size:19.6px;line-height:19.6px;color:#e4e4e4;letter-spacing:0.109px;">fastapi</span>
<div style="left:903.4px;top:1406px;width:73.6px;height:36px;background:#2b2b2b;border:2px solid #6c7480;border-radius:9px;"></div>
<span class="t" style="left:912.60px;top:1416px;font-size:19.6px;line-height:19.6px;color:#7d838c;letter-spacing:0.289px;">logfire</span>
<div style="left:1336px;top:1420px;width:19px;height:8px;background:#39607b;"></div>
<div style="left:1336px;top:1414px;width:4px;height:20px;background:#39607b;"></div>
<div style="left:1351px;top:1414px;width:4px;height:20px;background:#39607b;"></div>
<span class="t" style="left:1457.90px;top:1415px;font-size:19.6px;line-height:19.6px;color:#f0f0f0;letter-spacing:0.800px;">0.9ms</span>
<span class="t m" style="left:74px;top:1459px;font-size:24.5px;line-height:24.5px;letter-spacing:-0.3px;color:#8c8c8c">21:56:13</span>
<div style="left:205px;top:1451px;width:128px;height:36px;background:#262a35;border:2px solid #4a78b8;border-radius:9px;"></div>
<span class="t" style="left:255.25px;top:1460px;font-size:19.6px;line-height:19.6px;color:#5d8cd2;letter-spacing:0.859px;">api</span>
<svg class="i" style="left:385.7px;top:1458px" width="21" height="21" viewBox="0 0 21 21"><path d="M10.500 0.500 20.500 10.500 10.500 20.500 0.500 10.500Z" fill="#e84436"/></svg>
<div class="clip" style="left:418.1px;top:1451px;width:468.9px;height:36px"><span class="t m" style="left:1.4px;top:8px;font-size:24.5px;line-height:24.5px;letter-spacing:-0.3px;color:#f2f2f2">GET /baz (foobar)</span></div>
<div style="left:684px;top:1450px;width:99px;height:36px;border:2px solid #9a9a9a;border-radius:18px;"></div>
<div style="left:694px;top:1462.3px;width:12.4px;height:12.4px;background:#63d59c;border-radius:7px;"></div>
<span class="t" style="left:714.80px;top:1460px;font-size:19.6px;line-height:19.6px;color:#e4e4e4;letter-spacing:0.109px;">fastapi</span>
<div style="left:790px;top:1450px;width:105px;height:36px;background:#4e2f2f;border:2px solid #c95b5b;border-radius:9px;"></div>
<span class="t" style="left:799.80px;top:1459px;font-size:19.6px;line-height:19.6px;color:#dba3a3;letter-spacing:0.156px;">exception</span>
<div style="left:903.4px;top:1450px;width:73.6px;height:36px;background:#2b2b2b;border:2px solid #6c7480;border-radius:9px;"></div>
<span class="t" style="left:912.60px;top:1460px;font-size:19.6px;line-height:19.6px;color:#7d838c;letter-spacing:0.289px;">logfire</span>
<div style="left:1377px;top:1464px;width:48px;height:8px;background:#e84436;"></div>
<div style="left:1377px;top:1458px;width:4px;height:20px;background:#e84436;"></div>
<div style="left:1421px;top:1458px;width:4px;height:20px;background:#e84436;"></div>
<span class="t" style="left:1457.90px;top:1459px;font-size:19.6px;line-height:19.6px;color:#f0f0f0;letter-spacing:0.800px;">2ms</span>
<svg class="i" style="left:355px;top:911px" width="40" height="34.5" viewBox="355 911 40 34.5" fill="none" stroke="#3d3d3d" stroke-width="1.8"><path d="M363.600 913.000V934.500 M363.600 934.500Q363.600 941.500 370.600 941.500H387"/></svg>
<svg class="i" style="left:355px;top:999px" width="40" height="34.5" viewBox="355 999 40 34.5" fill="none" stroke="#3d3d3d" stroke-width="1.8"><path d="M363.600 1001.000V1022.500 M363.600 1022.500Q363.600 1029.500 370.600 1029.500H387"/></svg>
<svg class="i" style="left:355px;top:1131px" width="40" height="34.5" viewBox="355 1131 40 34.5" fill="none" stroke="#3d3d3d" stroke-width="1.8"><path d="M363.600 1133.000V1154.500 M363.600 1154.500Q363.600 1161.500 370.600 1161.500H387"/></svg>
<svg class="i" style="left:355px;top:1395px" width="40" height="78.5" viewBox="355 1395 40 78.5" fill="none" stroke="#3d3d3d" stroke-width="1.8"><path d="M363.600 1397.000V1462.500 M363.600 1418.500Q363.600 1425.500 370.600 1425.500H387 M363.600 1462.500Q363.600 1469.500 370.600 1469.500H387"/></svg>
<div style="left:1589px;top:286px;width:2px;height:1273.5px;background:#4c4c4c;"></div>
<div style="left:1578px;top:907px;width:24px;height:32px;background:#3a4a63;border-radius:6.5px;"></div>
<svg class="i" style="left:1578px;top:907px" width="24" height="32" viewBox="0 0 24 32" fill="#ffffff"><circle cx="9.4" cy="10.7" r="1.600"/><circle cx="9.4" cy="16.1" r="1.600"/><circle cx="9.4" cy="21.4" r="1.600"/><circle cx="14.6" cy="10.7" r="1.600"/><circle cx="14.6" cy="16.1" r="1.600"/><circle cx="14.6" cy="21.4" r="1.600"/></svg>
<div style="left:1605px;top:288px;width:897px;height:1270px;background:#212121;border:2px solid #4d4d4d;border-radius:11px;"></div>
<div style="left:1623px;top:306px;width:48px;height:48px;background:#345d78;border-radius:7px;"></div>
<svg class="i" style="left:1627px;top:310px;" width="40" height="40" viewBox="0 0 24 24" fill="none" stroke="#a9c6f3" stroke-width="2" stroke-linecap="round" stroke-linejoin="round"><circle cx="12" cy="12" r="10"/><path d="M12 16v-4"/><path d="M12 8h.01"/></svg>
<span class="t" style="left:1686.60px;top:316px;font-size:28.8px;line-height:28.8px;color:#d6d6d6;letter-spacing:0.098px;font-weight:700;">Span:</span>
<span class="t" style="left:1774.00px;top:316px;font-size:28.8px;line-height:28.8px;color:#cccccc;letter-spacing:-0.467px;">FastAPI arguments</span>
<svg class="i" style="left:2356px;top:313.6px;" width="32" height="32" viewBox="0 0 24 24" fill="none" stroke="#ffffff" stroke-width="2" stroke-linecap="round" stroke-linejoin="round"><rect width="18" height="18" x="3" y="3" rx="2"/><path d="M3 15h18"/></svg>
<svg class="i" style="left:2404px;top:313.6px;" width="32" height="32" viewBox="0 0 24 24" fill="none" stroke="#ffffff" stroke-width="2.2" stroke-linecap="round" stroke-linejoin="round"><path d="M10 13a5 5 0 0 0 7.54.54l3-3a5 5 0 0 0-7.07-7.07l-1.72 1.71"/><path d="M14 11a5 5 0 0 0-7.54-.54l-3 3a5 5 0 0 0 7.07 7.07l1.71-1.71"/></svg>
<svg class="i" style="left:2452px;top:313.6px;stroke-linecap:butt;" width="32" height="32" viewBox="0 0 24 24" fill="none" stroke="#d2d2d2" stroke-width="2" stroke-linecap="round" stroke-linejoin="round"><path d="M18 6 6 18"/><path d="m6 6 12 12"/></svg>
<div style="left:1623px;top:386px;width:99px;height:33px;border:2px solid #7a7a7a;border-radius:17px;"></div>
<div style="left:1632.7px;top:396.2px;width:12.4px;height:12.4px;background:#63d59c;border-radius:7px;"></div>
<span class="t" style="left:1653.70px;top:394px;font-size:19.6px;line-height:19.6px;color:#e4e4e4;letter-spacing:0.109px;">fastapi</span>
<div style="left:1623px;top:435px;width:225.8px;height:43.6px;background:#364257;border-radius:9px;"></div>
<div style="left:1623px;top:435px;width:174.5px;height:43.6px;background:#334053;border-radius:9px 0 0 9px"></div>
<span class="t" style="left:1632.80px;top:445px;font-size:25.2px;line-height:25.2px;color:#d6d6da;letter-spacing:-0.144px;font-style:italic;">Service Name</span>
<span class="t" style="left:1805.30px;top:445px;font-size:25.2px;line-height:25.2px;color:#d6d6da;letter-spacing:0.584px;">api</span>
<div style="left:1623px;top:487.2px;width:638.1px;height:43.6px;background:#364257;border-radius:9px;"></div>
<div style="left:1623px;top:487.2px;width:111px;height:43.6px;background:#334053;border-radius:9px 0 0 9px"></div>
<span class="t" style="left:1633.80px;top:497px;font-size:25.2px;line-height:25.2px;color:#d6d6da;letter-spacing:-0.233px;font-style:italic;">Trace ID</span>
<svg class="i" style="left:1742px;top:493.5px;" width="31" height="31" viewBox="0 0 24 24" fill="none" stroke="#d6d6da" stroke-width="2.2" stroke-linecap="round" stroke-linejoin="round"><path d="M9 17H7A5 5 0 0 1 7 7h2"/><path d="M15 7h2a5 5 0 1 1 0 10h-2"/><path d="M8 12h8"/></svg>
<span class="t" style="left:1783.10px;top:497px;font-size:25.2px;line-height:25.2px;color:#d6d6da;letter-spacing:0.432px;">#d834c3374dd6fa2e4aa82a55ab217509</span>
<div style="left:1623px;top:539.2px;width:387.7px;height:43.6px;background:#364257;border-radius:9px;"></div>
<div style="left:1623px;top:539.2px;width:105.79999999999995px;height:43.6px;background:#334053;border-radius:9px 0 0 9px"></div>
<span class="t" style="left:1632.80px;top:549px;font-size:25.2px;line-height:25.2px;color:#d6d6da;letter-spacing:-0.524px;font-style:italic;">Span ID</span>
<svg class="i" style="left:1736.9px;top:545.5px;" width="31" height="31" viewBox="0 0 24 24" fill="none" stroke="#d6d6da" stroke-width="2.2" stroke-linecap="round" stroke-linejoin="round"><path d="M9 17H7A5 5 0 0 1 7 7h2"/><path d="M15 7h2a5 5 0 1 1 0 10h-2"/><path d="M8 12h8"/></svg>
<span class="t" style="left:1776.90px;top:549px;font-size:25.2px;line-height:25.2px;color:#d6d6da;letter-spacing:0.431px;">#5008bce5f7fe21af</span>
<div style="left:2018.9px;top:539.2px;width:227.3px;height:43.6px;background:#364257;border-radius:9px;"></div>
<div style="left:2018.9px;top:539.2px;width:70.29999999999973px;height:43.6px;background:#334053;border-radius:9px 0 0 9px"></div>
<span class="t" style="left:2028.30px;top:549px;font-size:25.2px;line-height:25.2px;color:#d6d6da;font-style:italic;">Date</span>
<span class="t" style="left:2097.90px;top:549px;font-size:25.2px;line-height:25.2px;color:#d6d6da;letter-spacing:1.079px;">2024-09-18</span>
<div style="left:1623px;top:591.2px;width:475px;height:43.6px;background:#364257;border-radius:9px;"></div>
<div style="left:1623px;top:591.2px;width:134.70000000000005px;height:43.6px;background:#334053;border-radius:9px 0 0 9px"></div>
<span class="t" style="left:1633.80px;top:601px;font-size:25.2px;line-height:25.2px;color:#d6d6da;letter-spacing:-0.224px;font-style:italic;">Time span</span>
<span class="t" style="left:1765.60px;top:601px;font-size:25.2px;line-height:25.2px;color:#d6d6da;letter-spacing:-0.138px;">21:53:35.114 to 21:53:35.115</span>
<div style="left:2106.1px;top:591.2px;width:176.9px;height:43.6px;background:#364257;border-radius:9px;"></div>
<div style="left:2106.1px;top:591.2px;width:112.80000000000018px;height:43.6px;background:#334053;border-radius:9px 0 0 9px"></div>
<span class="t" style="left:2115.40px;top:601px;font-size:25.2px;line-height:25.2px;color:#d6d6da;letter-spacing:0.212px;font-style:italic;">Duration</span>
<span class="t" style="left:2227.70px;top:601px;font-size:25.2px;line-height:25.2px;color:#d6d6da;letter-spacing:-1.350px;">1ms</span>
<div style="left:1623px;top:667px;width:845px;height:46px;background:#2a2a2a;"></div>
<div style="left:1623px;top:712px;width:845px;height:2px;background:#474747;"></div>
<div style="left:1623px;top:712px;width:110px;height:2px;background:#5b7399;"></div>
<span class="t" style="left:1638.10px;top:679px;font-size:24.6px;line-height:24.6px;color:#cacaca;letter-spacing:0.471px;">Details</span>
<span class="t" style="left:1748.20px;top:679px;font-size:24.6px;line-height:24.6px;color:#cacaca;letter-spacing:-0.385px;">Raw Data</span>
<span class="t" style="left:1627.20px;top:754px;font-size:37.5px;line-height:37.5px;color:#ffffff;letter-spacing:-0.693px;font-weight:700;">Arguments:</span>
<span class="t" style="left:1839.10px;top:754px;font-size:37.5px;line-height:37.5px;color:#c4c4c4;letter-spacing:-0.694px;font-weight:700;">(as JSON)</span>
<svg class="i" style="left:1630.7px;top:806.3px" width="15" height="15" viewBox="0 0 24 24" fill="none" stroke="#a0a0a0" stroke-width="3.2" stroke-linecap="round" stroke-linejoin="round"><path d="m5 8.500 7 7 7-7"/></svg>
<span class="t d" style="left:1648.2px;top:802px;font-size:22.4px;line-height:22.4px"><span style="position:static;display:inline;color:#d4d4d4;">{ </span><span style="position:static;display:inline;color:#6a6a6a;font-style:italic;margin-left:3px;">6 items</span></span>
<div style="left:1639px;top:834px;width:2px;height:235px;background:#2f313c;"></div>
<span class="t d" style="left:1669.1px;top:838px;font-size:22.4px;line-height:22.4px"><span style="position:static;display:inline;color:#9cdcfe;">"values"</span><span style="position:static;display:inline;color:#d4d4d4;margin-left:2px;">:</span><span style="position:static;display:inline;color:#d4d4d4;margin-right:3.5px;"> </span><span style="position:static;display:inline;color:#d4d4d4;">{}</span><span style="position:static;display:inline;color:#6a6a6a;font-style:italic;margin-left:2px;"> 0 items</span></span>
<span class="t d" style="left:1669.1px;top:869px;font-size:22.4px;line-height:22.4px"><span style="position:static;display:inline;color:#9cdcfe;">"errors"</span><span style="position:static;display:inline;color:#d4d4d4;margin-left:2px;">:</span><span style="position:static;display:inline;color:#d4d4d4;margin-right:3.5px;"> </span><span style="position:static;display:inline;color:#d4d4d4;">[]</span><span style="position:static;display:inline;color:#6a6a6a;font-style:italic;margin-left:2px;"> 0 items</span></span>
<span class="t d" style="left:1669.1px;top:907px;font-size:22.4px;line-height:22.4px"><span style="position:static;display:inline;color:#9cdcfe;">"http.method"</span><span style="position:static;display:inline;color:#d4d4d4;margin-left:2px;">:</span><span style="position:static;display:inline;color:#d4d4d4;margin-right:3.5px;"> </span><span style="position:static;display:inline;color:#ce9178;">"GET"</span><span style="position:static;display:inline;color:#9cdcfe;">,</span></span>
<span class="t d" style="left:1669.1px;top:950px;font-size:22.4px;line-height:22.4px"><span style="position:static;display:inline;color:#9cdcfe;">"http.route"</span><span style="position:static;display:inline;color:#d4d4d4;margin-left:2px;">:</span><span style="position:static;display:inline;color:#d4d4d4;margin-right:3.5px;"> </span><span style="position:static;display:inline;color:#ce9178;">"/foobar"</span><span style="position:static;display:inline;color:#9cdcfe;">,</span></span>
<span class="t d" style="left:1669.1px;top:993px;font-size:22.4px;line-height:22.4px"><span style="position:static;display:inline;color:#9cdcfe;">"fastapi.route.name"</span><span style="position:static;display:inline;color:#d4d4d4;margin-left:2px;">:</span><span style="position:static;display:inline;color:#d4d4d4;margin-right:3.5px;"> </span><span style="position:static;display:inline;color:#ce9178;">"foobar"</span><span style="position:static;display:inline;color:#9cdcfe;">,</span></span>
<span class="t d" style="left:1669.1px;top:1037px;font-size:22.4px;line-height:22.4px"><span style="position:static;display:inline;color:#9cdcfe;">"fastapi.route.operation_id"</span><span style="position:static;display:inline;color:#d4d4d4;margin-left:2px;">:</span><span style="position:static;display:inline;color:#d4d4d4;margin-right:3.5px;"> </span><span style="position:static;display:inline;color:#569cd6;">null</span><span style="position:static;display:inline;color:#9cdcfe;">,</span></span>
<span class="t d" style="left:1634.4px;top:1072px;font-size:22.4px;line-height:22.4px"><span style="position:static;display:inline;color:#d4d4d4;">}</span></span>
<span class="t" style="left:1626.80px;top:1151px;font-size:38px;line-height:38px;color:#ffffff;letter-spacing:-1.080px;font-weight:700;">Code Details</span>
<span class="t" style="left:1628.40px;top:1205px;font-size:28.5px;line-height:28.5px;color:#cccccc;letter-spacing:0.239px;">Code Filepath:</span>
<span class="t" style="left:1837.20px;top:1205px;font-size:28.5px;line-height:28.5px;color:#ffffff;letter-spacing:0.114px;">main.py</span>
<span class="t" style="left:1628.40px;top:1250px;font-size:28.5px;line-height:28.5px;color:#cccccc;letter-spacing:0.229px;">Code Lineno:</span>
<span class="t" style="left:1838.20px;top:1250px;font-size:28.5px;line-height:28.5px;color:#ffffff;letter-spacing:2.556px;">60</span>
<svg class="i" style="left:1630px;top:1334px" width="42" height="42" viewBox="0 0 24 24" fill="none" stroke="#ffffff" stroke-width="2.3" stroke-linecap="round" stroke-linejoin="round"><path d="m6 9 6 6 6-6"/></svg>
<span class="t" style="left:1675.00px;top:1334px;font-size:38px;line-height:38px;color:#ffffff;letter-spacing:-0.536px;font-weight:700;">Attributes</span>
<div style="left:1627px;top:1389.6px;width:837.5px;height:2px;background:#3b4a5f;"></div>
<svg class="i" style="left:1630.7px;top:1415px" width="15" height="15" viewBox="0 0 24 24" fill="none" stroke="#a0a0a0" stroke-width="3.2" stroke-linecap="round" stroke-linejoin="round"><path d="m5 8.500 7 7 7-7"/></svg>
<span class="t d" style="left:1648.2px;top:1411px;font-size:22.4px;line-height:22.4px"><span style="position:static;display:inline;color:#d4d4d4;">{ </span><span style="position:static;display:inline;color:#6a6a6a;font-style:italic;margin-left:3px;">9 items</span></span>
<div style="left:1639px;top:1443px;width:2px;height:96px;background:#2f313c;"></div>
<span class="t d" style="left:1669.1px;top:1453px;font-size:22.4px;line-height:22.4px"><span style="position:static;display:inline;color:#9cdcfe;">"code.filepath"</span><span style="position:static;display:inline;color:#d4d4d4;margin-left:2px;">:</span><span style="position:static;display:inline;color:#d4d4d4;margin-right:3.5px;"> </span><span style="position:static;display:inline;color:#ce9178;">"main.py"</span><span style="position:static;display:inline;color:#9cdcfe;">,</span></span>
<span class="t d" style="left:1669.1px;top:1496px;font-size:22.4px;line-height:22.4px"><span style="position:static;display:inline;color:#9cdcfe;">"code.lineno"</span><span style="position:static;display:inline;color:#d4d4d4;margin-left:2px;">:</span><span style="position:static;display:inline;color:#d4d4d4;margin-right:3.5px;"> </span><span style="position:static;display:inline;color:#b5cea8;">60</span><span style="position:static;display:inline;color:#9cdcfe;">,</span></span>
</div>
</body></html>
